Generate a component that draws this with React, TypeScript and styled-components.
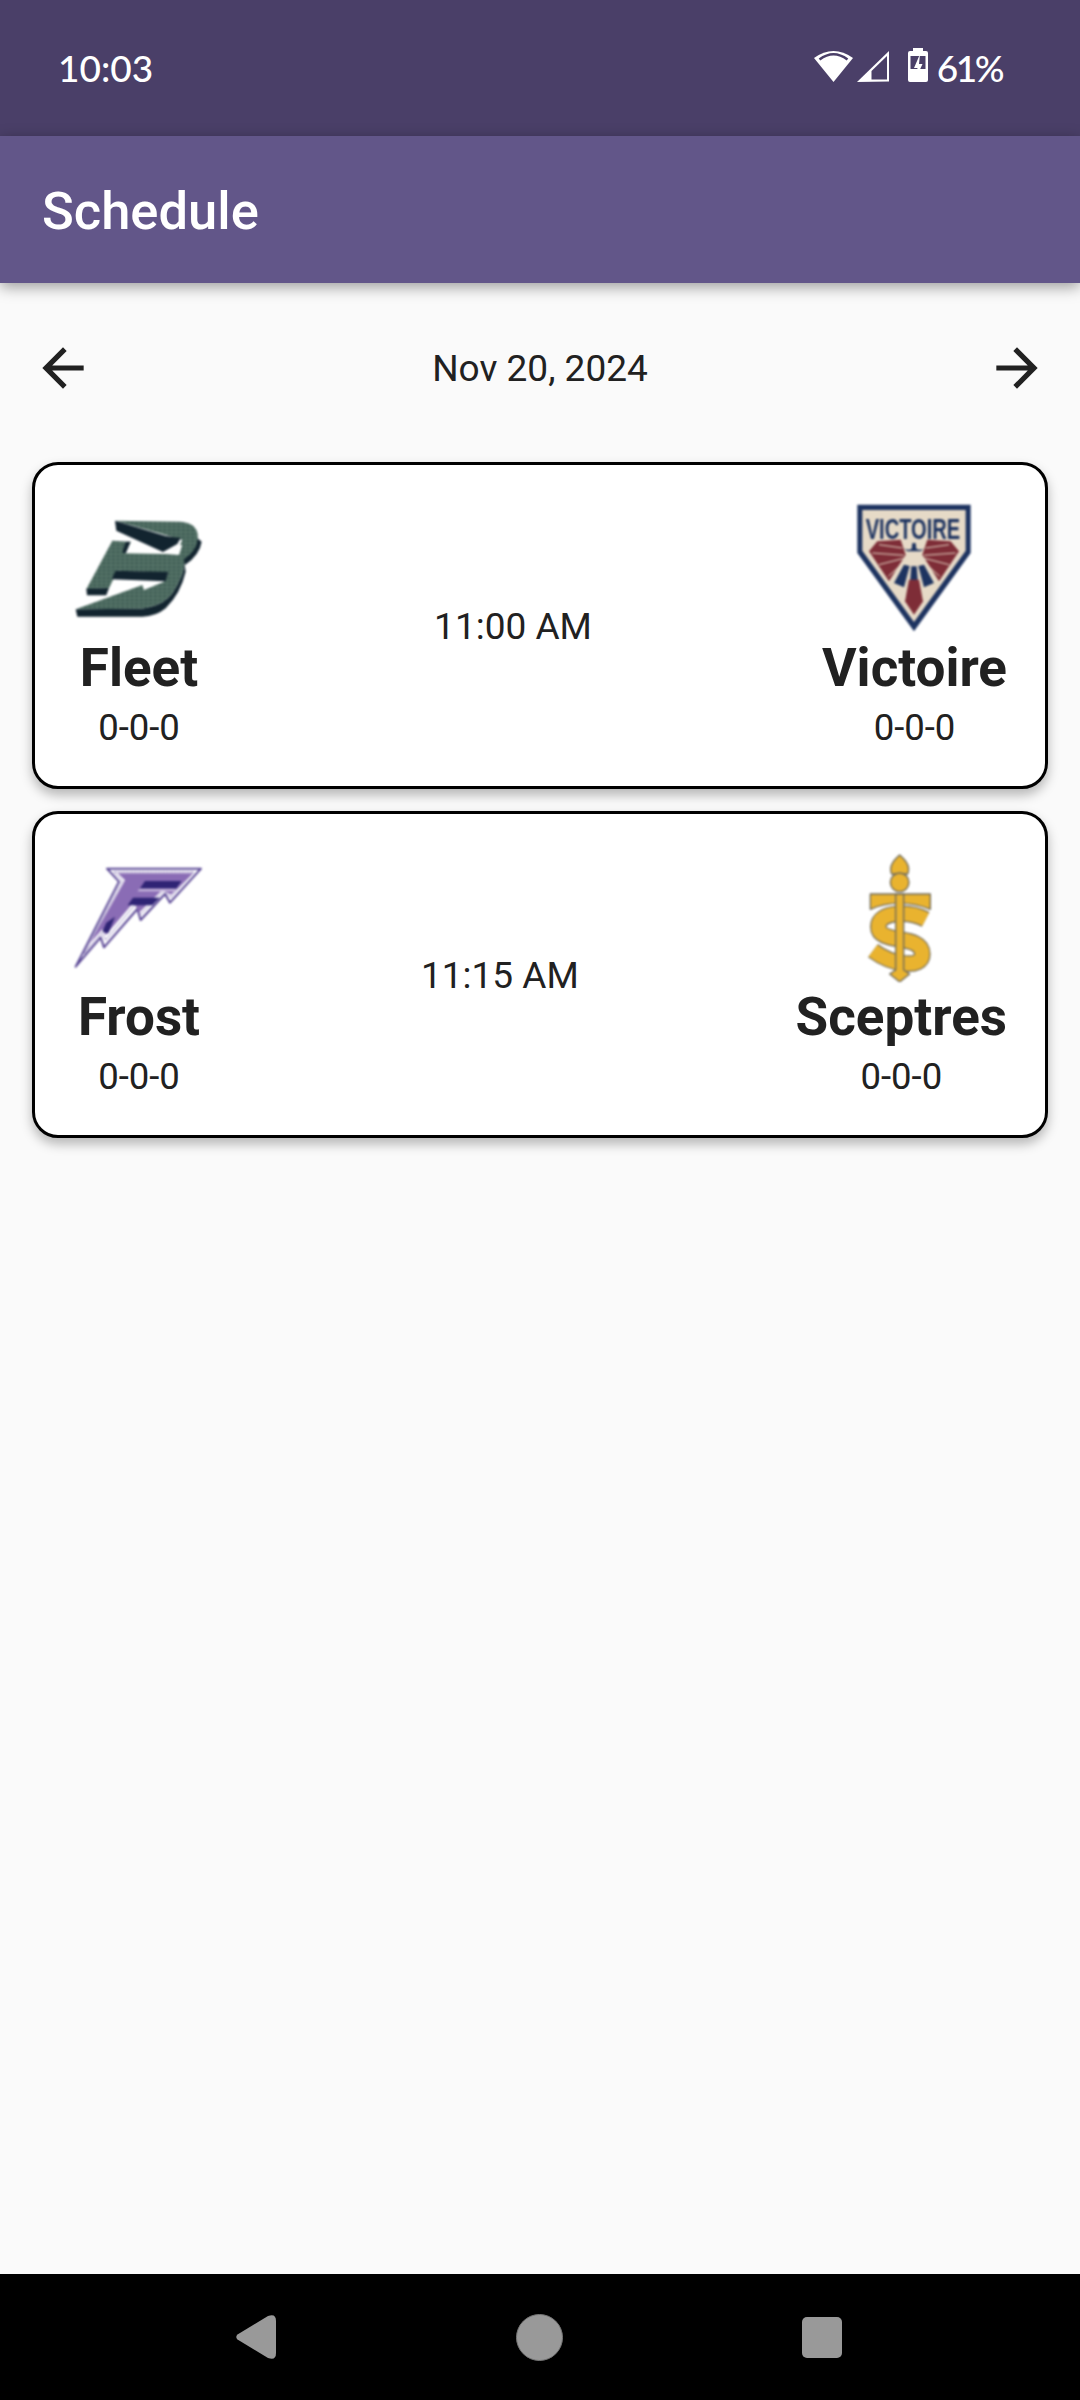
import React from "react";
import styled, { createGlobalStyle } from "styled-components";

const Global = createGlobalStyle`
  html, body { margin: 0; padding: 0; background: #fafafa; }
  * { box-sizing: border-box; }
`;

const Screen = styled.div`
  width: 1080px;
  height: 2400px;
  display: flex;
  flex-direction: column;
  overflow: hidden;
  background: #fafafa;
  font-family: Roboto, "Liberation Sans", sans-serif;
  color: #212121;
`;

const StatusBar = styled.div`
  height: 136px;
  flex: none;
  background: #4a3f68;
  color: #fff;
  display: flex;
  align-items: center;
  justify-content: space-between;
  padding: 0 78px 2px 58px;
  font-family: Lato, sans-serif;
  font-size: 37px;
  font-weight: 500;
`;

const StatusIcons = styled.div`
  display: flex;
  align-items: center;
`;

const StatusGlyphs = styled.svg`
  width: 114px;
  height: 40px;
  margin-right: 9px;
  display: block;
  overflow: visible;
`;

const Percent = styled.span`
  letter-spacing: -2.5px;
`;

const AppBar = styled.header`
  height: 147px;
  flex: none;
  background: #625689;
  color: #fff;
  display: flex;
  align-items: center;
  padding: 2px 42px 0;
  font-size: 52.5px;
  font-weight: 500;
  box-shadow: 0 4px 14px rgba(0, 0, 0, 0.38);
  position: relative;
`;

const Main = styled.main`
  flex: 1;
  padding: 54px 32px 0;
  display: flex;
  flex-direction: column;
`;

const DateRow = styled.div`
  display: flex;
  align-items: center;
  justify-content: space-between;
  height: 62px;
  margin-bottom: 63px;
  font-size: 37px;
`;

const Arrow = styled.svg`
  width: 62px;
  height: 62px;
  fill: #212121;
  display: block;
`;

const Cards = styled.div`
  display: flex;
  flex-direction: column;
  gap: 22px;
`;

const Card = styled.section`
  height: 327px;
  background: #fff;
  border: 3px solid #000;
  border-radius: 26px;
  box-shadow: 0 6px 12px rgba(0, 0, 0, 0.28);
  padding: 38px 38px 38px 39px;
  display: flex;
  align-items: center;
  justify-content: space-between;
`;

const Team = styled.div`
  display: flex;
  flex-direction: column;
  align-items: center;
  align-self: flex-start;
`;

const LogoSvg = styled.svg`
  width: 130px;
  height: 130px;
  display: block;
  filter: blur(0.8px);
`;

const TeamName = styled.div`
  font-size: 53px;
  font-weight: 700;
  line-height: 60px;
  margin-top: 5px;
`;

const Record = styled.div`
  font-size: 36.5px;
  line-height: 42px;
  margin-top: 9px;
`;

const Time = styled.div`
  font-size: 37px;
  padding-top: 2px;
`;

const NavBar = styled.nav`
  height: 126px;
  flex: none;
  background: #000;
  display: flex;
  align-items: center;
  justify-content: space-between;
  padding: 0 238px 0 236px;
`;

const NavBack = styled.svg`
  width: 40px;
  height: 44px;
  fill: #999;
  display: block;
`;

const NavHome = styled.div`
  width: 47px;
  height: 47px;
  border-radius: 50%;
  background: #999;
  border: 1px solid #777;
`;

const NavRecent = styled.div`
  width: 40px;
  height: 41px;
  border-radius: 5px;
  background: #999;
`;

const FleetLogo = () => (
  <LogoSvg viewBox="0 0 130 130">
    <defs>
      <pattern id="scale" width="14" height="11" patternUnits="userSpaceOnUse">
        <rect width="14" height="11" fill="#567468" />
        <ellipse cx="7" cy="6" rx="5.500" ry="2.400" fill="#33504a" />
      </pattern>
    </defs>
    <g transform="translate(-5 7) scale(.3333)">
      <path fill="#12242f" d="M386 85 L398 95 Q392 135 348 165 L342 150 Z" />
      <path fill="#12242f" d="M345 150 L350 185 Q335 250 290 295 Q260 320 220 320 L25 320 L20 298 L215 296 Q280 290 310 250 Q352 185 345 148 Z" />
      <path fill="url(#scale)" d="M140 32 L335 35 Q392 40 386 90 Q380 125 345 148 Q352 185 310 250 Q280 290 215 296 L20 298 L220 225 L225 240 L285 215 L298 188 L145 182 L120 235 L52 238 L130 92 L185 95 L170 130 L290 132 L330 112 L340 90 L290 75 Z" />
      <path fill="#12242f" d="M138 32 L290 78 L335 84 L325 102 L282 126 L142 62 Z" />
      <path fill="#fff" d="M290 132 L322 108 L340 104 L330 135 Z" />
      <path fill="#12242f" d="M140 182 L298 186 L290 214 L128 208 Z" />
      <path fill="#12242f" d="M52 236 L120 234 L112 256 L54 256 Z" />
      <path fill="#12242f" d="M185 95 L170 130 L160 128 L170 96 Z" />
    </g>
  </LogoSvg>
);

const VictoireLogo = () => (
  <LogoSvg viewBox="0 0 130 130">
    <g transform="translate(0 -5) scale(.3333)">
      <path fill="#1d3360" d="M25 20 L365 20 L365 165 L195 400 L25 165 Z" />
      <path fill="#e6dac7" d="M40 36 L350 36 L350 158 L195 372 L40 158 Z" />
      <text transform="translate(50 122) scale(.67 1)" fontFamily="Liberation Sans, sans-serif" fontWeight="700" fontSize="90" fill="#1d3360">VICTOIRE</text>
      <path fill="#7e2d37" d="M85 130 L155 125 L170 170 L120 250 L60 160 Z" />
      <path fill="#7e2d37" d="M305 130 L235 125 L220 170 L270 250 L330 160 Z" />
      <path stroke="#e6dac7" strokeWidth="3" fill="none" d="M70 165 L165 172 M90 200 L168 180 M118 235 L172 186 M90 140 L160 150 M320 165 L225 172 M300 200 L222 180 M272 235 L218 186 M300 140 L230 150" />
      <path fill="#1d3360" d="M165 200 L182 204 L165 268 L135 255 Z M225 200 L208 204 L225 268 L255 255 Z M187 205 L203 205 L207 255 L183 255 Z" />
      <path fill="#7e2d37" d="M180 245 L210 245 L222 310 L195 350 L168 310 Z" />
      <path fill="#1d3360" d="M165 152 Q180 158 188 152 L190 135 L200 135 L202 152 Q212 158 225 152 L215 160 L175 160 Z" />
    </g>
  </LogoSvg>
);

const FrostLogo = () => (
  <LogoSvg viewBox="0 0 130 130">
    <g transform="translate(-5 8) scale(.3333)">
      <path fill="#fff" stroke="#5a4795" strokeWidth="6" strokeLinejoin="round" d="M114 26 L396 26 L303 128 L288 102 L215 180 L205 147 L105 262 L95 232 L20 320 L150 65 Z" />
      <path fill="none" stroke="#6d58a3" strokeWidth="3" strokeDasharray="5 3" d="M135 36 L374 36 L305 112 L285 92 L212 166 L200 132 L110 240 L98 218 L45 282 L160 62 Z" />
      <path fill="#8a6cb5" d="M146 40 L372 40 L306 104 L280 90 L210 158 L195 126 L110 226 L100 208 L62 250 L168 60 Z" />
      <path fill="#2f2475" d="M228 63 L338 63 L322 86 L212 86 Z M192 113 L272 113 L250 136 L176 136 Z M112 188 L138 170 L118 220 L100 215 Z" />
      <path fill="#c7b6dc" d="M212 86 L322 86 L315 94 L205 94 Z" />
    </g>
  </LogoSvg>
);

const SceptresLogo = () => (
  <LogoSvg viewBox="0 0 130 130">
    <g transform="translate(23 -2) scale(.3333)" stroke="#6f6a5a" strokeWidth="4" strokeLinejoin="round">
      <path fill="#e9b32f" d="M122 15 Q158 45 146 72 L98 72 Q86 45 122 15 Z" />
      <circle cx="122" cy="97" r="28" fill="#e9b32f" />
      <path fill="#e9b32f" d="M34 132 L214 132 L214 178 Q170 160 122 160 Q74 160 34 178 Z" />
      <path fill="none" strokeWidth="50" d="M200 208 C150 182 58 184 58 230 C58 285 190 250 190 312 C190 358 100 345 42 302" />
      <path fill="none" stroke="#e9b32f" strokeWidth="43" d="M200 208 C150 182 58 184 58 230 C58 285 190 250 190 312 C190 358 100 345 42 302" />
      <path fill="#e9b32f" d="M110 132 L134 132 L134 360 L152 372 L122 396 L92 372 L110 360 Z" />
    </g>
  </LogoSvg>
);

const games = [
  { home: "Fleet", away: "Victoire", time: "11:00 AM", HomeLogo: FleetLogo, AwayLogo: VictoireLogo },
  { home: "Frost", away: "Sceptres", time: "11:15 AM", HomeLogo: FrostLogo, AwayLogo: SceptresLogo },
];

export default function App() {
  return (
    <Screen>
      <Global />
      <StatusBar>
        <span>10:03</span>
        <StatusIcons>
          <StatusGlyphs viewBox="0 0 114 40">
            <g transform="translate(0 -4)">
              <path fill="#fff" d="M0 15 Q19.500 1 39 15 L19.500 39 Z" />
              <path fill="none" stroke="#4a3f68" strokeWidth="2.600" d="M5.500 16.500 Q19.500 6 33.500 16.500" />
              <path fill="#fff" d="M43 39 L75 8 L75 38.500 Z" />
              <path fill="#4a3f68" d="M57.500 36.500 L73 36.500 L73 13 L57.500 28 Z" />
              <path fill="#fff" d="M94 10 Q94 8 96 8 L112 8 Q114 8 114 10 L114 37 Q114 39 112 39 L96 39 Q94 39 94 37 Z M99 5 L109 5 L109 9 L99 9 Z" />
              <path fill="#4a3f68" d="M96.500 13 L111.500 13 L111.500 26 L96.500 26 Z" />
              <path fill="#fff" d="M106 11 L100 25 L103.500 25 L102 35 L108.500 21 L105 21 Z" />
            </g>
          </StatusGlyphs>
          <Percent>61%</Percent>
        </StatusIcons>
      </StatusBar>
      <AppBar>Schedule</AppBar>
      <Main>
        <DateRow>
          <Arrow viewBox="0 0 24 24">
            <path d="M20 11H7.830l5.590-5.590L12 4l-8 8 8 8 1.410-1.410L7.830 13H20v-2z" />
          </Arrow>
          <span>Nov 20, 2024</span>
          <Arrow viewBox="0 0 24 24">
            <path d="M4 11h12.170l-5.590-5.590L12 4l8 8-8 8-1.410-1.410L16.170 13H4v-2z" />
          </Arrow>
        </DateRow>
        <Cards>
          {games.map(({ home, away, time, HomeLogo, AwayLogo }) => (
            <Card key={home}>
              <Team>
                <HomeLogo />
                <TeamName>{home}</TeamName>
                <Record>0-0-0</Record>
              </Team>
              <Time>{time}</Time>
              <Team>
                <AwayLogo />
                <TeamName>{away}</TeamName>
                <Record>0-0-0</Record>
              </Team>
            </Card>
          ))}
        </Cards>
      </Main>
      <NavBar>
        <NavBack viewBox="0 0 40 44">
          <path d="M1.500 19.500 L32 1 Q40 -2 40 6 L40 38 Q40 46 32 43 L1.500 24.500 Q-1 22 1.500 19.500 Z" />
        </NavBack>
        <NavHome />
        <NavRecent />
      </NavBar>
    </Screen>
  );
}
